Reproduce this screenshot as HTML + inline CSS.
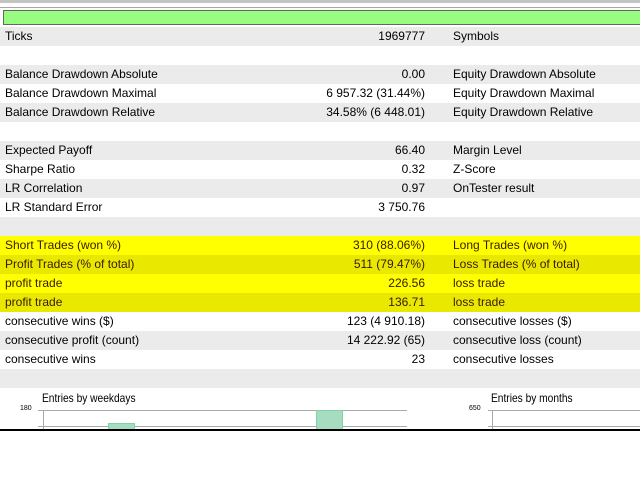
<!DOCTYPE html>
<html><head><meta charset="utf-8"><style>
*{margin:0;padding:0;box-sizing:border-box}
body{width:640px;height:480px;background:#fff;position:relative;overflow:hidden;font-family:"Liberation Sans",sans-serif;font-size:12px;color:#000}
.row{position:absolute;left:0;width:640px;height:19px;line-height:19px}
.g{background:#ebebeb}
.y1{background:#ffff00}
.y2{background:#e8e800}
.a{position:absolute;left:5px;white-space:nowrap}
.b{position:absolute;right:215px;white-space:nowrap}
.c{position:absolute;left:453px;white-space:nowrap}
.yl{color:#3a1a00}
.t{position:absolute;font-family:"Liberation Sans",sans-serif;white-space:nowrap;transform-origin:0 0}
.h{position:absolute;height:1px;background:#aaa}
</style></head><body>
<div style="position:absolute;left:0;top:0;width:640px;height:3px;background:#c4c4c4"></div>
<div style="position:absolute;left:0;top:7px;width:640px;height:1px;background:#a8a8a8"></div>
<div style="position:absolute;left:3px;top:10px;width:640px;height:15px;background:#98fc80;border:1px solid #666"></div>

<div class="row g" style="top:27px"><span class="a">Ticks</span><span class="b">1969777</span><span class="c">Symbols</span></div>
<div class="row g" style="top:65px"><span class="a">Balance Drawdown Absolute</span><span class="b">0.00</span><span class="c">Equity Drawdown Absolute</span></div>
<div class="row" style="top:84px"><span class="a">Balance Drawdown Maximal</span><span class="b">6 957.32 (31.44%)</span><span class="c">Equity Drawdown Maximal</span></div>
<div class="row g" style="top:103px"><span class="a">Balance Drawdown Relative</span><span class="b">34.58% (6 448.01)</span><span class="c">Equity Drawdown Relative</span></div>
<div class="row g" style="top:141px"><span class="a">Expected Payoff</span><span class="b">66.40</span><span class="c">Margin Level</span></div>
<div class="row" style="top:160px"><span class="a">Sharpe Ratio</span><span class="b">0.32</span><span class="c">Z-Score</span></div>
<div class="row g" style="top:179px"><span class="a">LR Correlation</span><span class="b">0.97</span><span class="c">OnTester result</span></div>
<div class="row" style="top:198px"><span class="a">LR Standard Error</span><span class="b">3 750.76</span></div>
<div class="row g" style="top:217px"></div>
<div class="row y1 yl" style="top:236px"><span class="a">Short Trades (won %)</span><span class="b">310 (88.06%)</span><span class="c">Long Trades (won %)</span></div>
<div class="row y2 yl" style="top:255px"><span class="a">Profit Trades (% of total)</span><span class="b">511 (79.47%)</span><span class="c">Loss Trades (% of total)</span></div>
<div class="row y1 yl" style="top:274px"><span class="a">profit trade</span><span class="b">226.56</span><span class="c">loss trade</span></div>
<div class="row y2 yl" style="top:293px"><span class="a">profit trade</span><span class="b">136.71</span><span class="c">loss trade</span></div>
<div class="row" style="top:312px"><span class="a">consecutive wins ($)</span><span class="b">123 (4 910.18)</span><span class="c">consecutive losses ($)</span></div>
<div class="row g" style="top:331px"><span class="a">consecutive profit (count)</span><span class="b">14 222.92 (65)</span><span class="c">consecutive loss (count)</span></div>
<div class="row" style="top:350px"><span class="a">consecutive wins</span><span class="b">23</span><span class="c">consecutive losses</span></div>
<div class="row g" style="top:369px"></div>

<div class="t" style="left:42px;top:391px;font-size:12px;transform:scaleX(0.85)">Entries by weekdays</div>
<div class="t" style="left:20px;top:405px;font-size:7px">180</div>
<div class="h" style="left:38px;top:410px;width:369px"></div>
<div class="h" style="left:38px;top:426px;width:369px"></div>
<div style="position:absolute;left:43px;top:410px;width:1px;height:20px;background:#aaa"></div>
<div style="position:absolute;left:108px;top:423px;width:27px;height:7px;background:#a8dcc0;border:1px solid #80d0a8"></div>
<div style="position:absolute;left:316px;top:410px;width:27px;height:20px;background:#a8dcc0;border:1px solid #80d0a8"></div>
<div class="t" style="left:491px;top:391px;font-size:12px;transform:scaleX(0.85)">Entries by months</div>
<div class="t" style="left:469px;top:405px;font-size:7px">650</div>
<div class="h" style="left:488px;top:410px;width:152px"></div>
<div class="h" style="left:488px;top:426px;width:152px"></div>
<div style="position:absolute;left:492px;top:410px;width:1px;height:20px;background:#aaa"></div>
<div style="position:absolute;left:0;top:429px;width:640px;height:2px;background:#000"></div>
</body></html>
